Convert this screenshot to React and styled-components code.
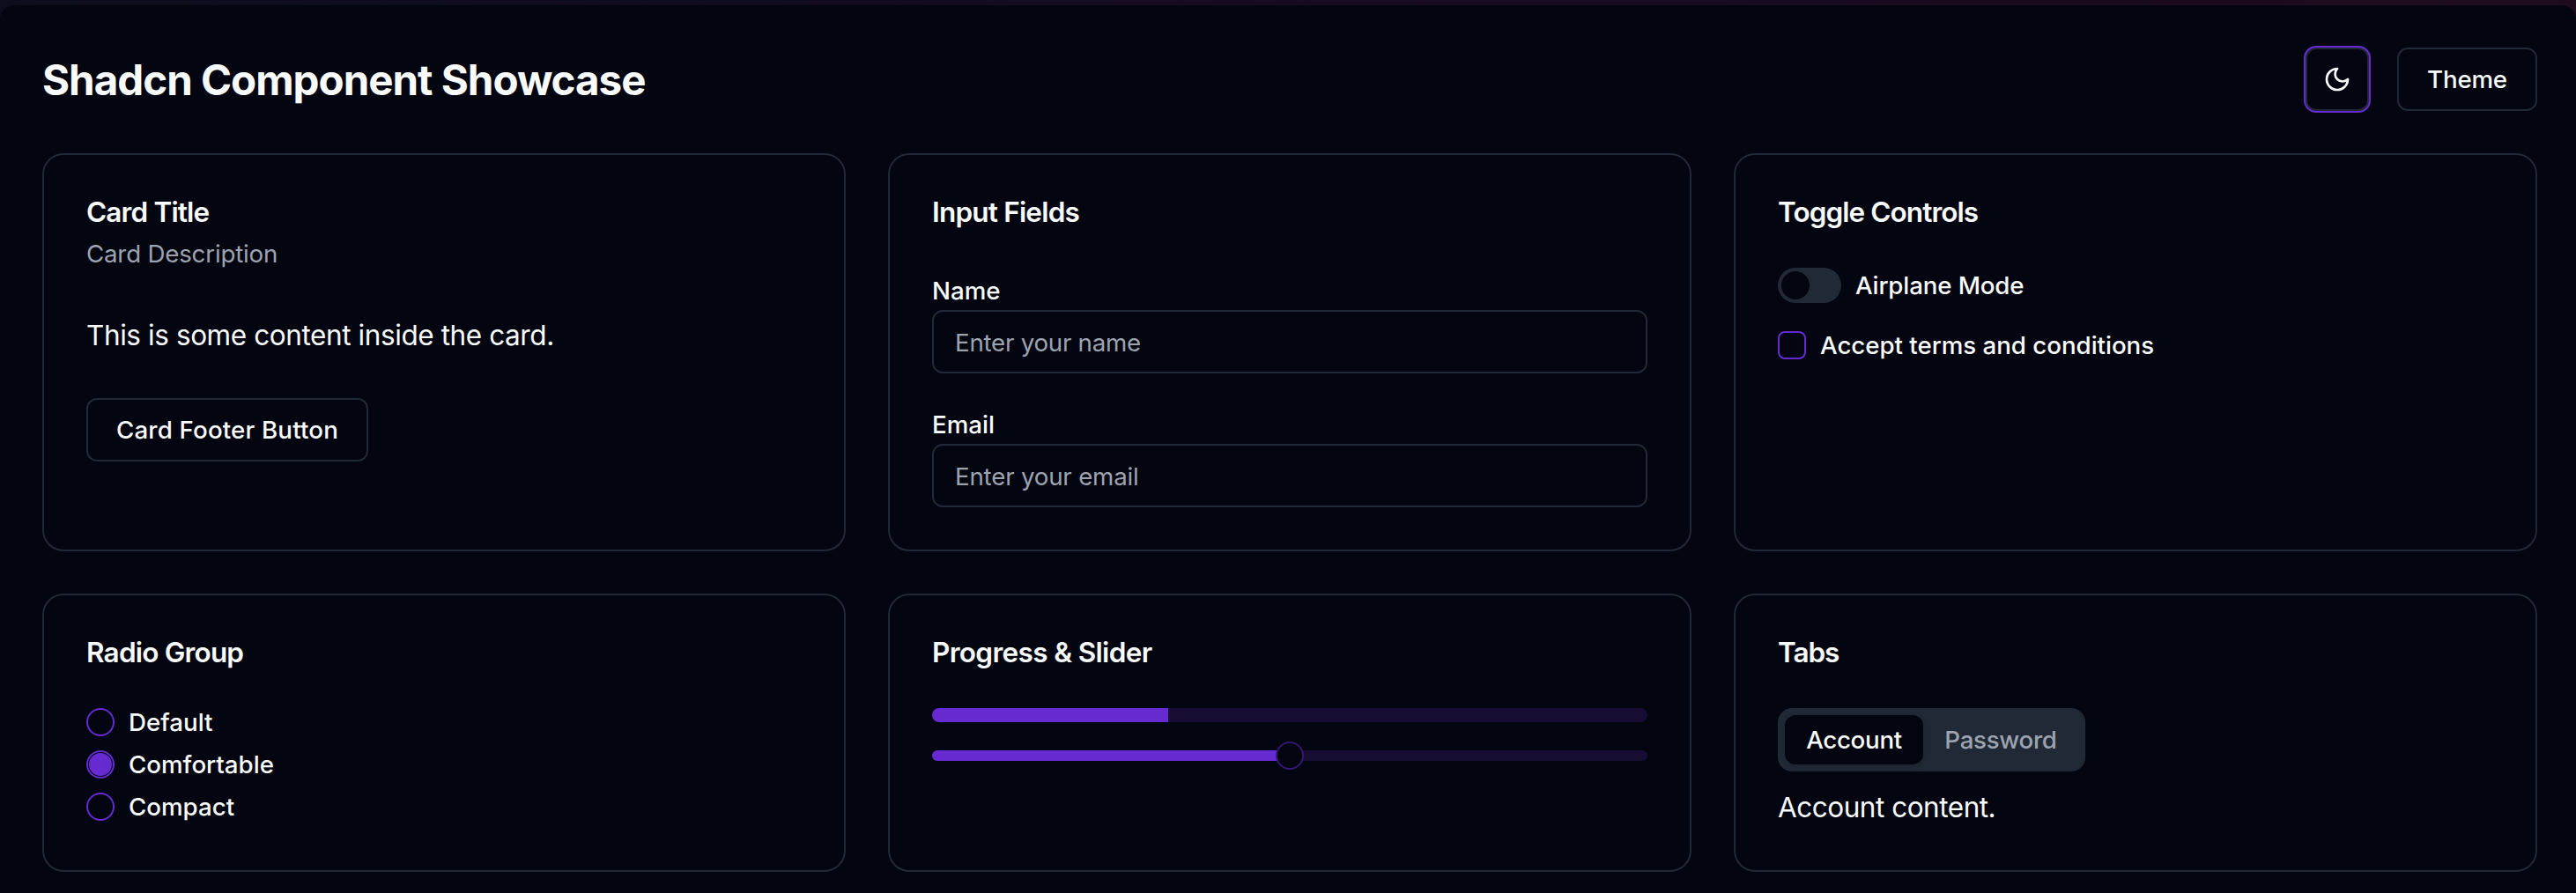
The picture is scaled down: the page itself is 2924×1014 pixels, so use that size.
import React from "react";
import styled, { createGlobalStyle, css } from "styled-components";

const c = {
  bg: "#030510",
  fg: "#f9fafb",
  border: "#212936",
  muted: "#9ca3af",
  primary: "#652bd1",
  track: "#170d33",
};

const Global = createGlobalStyle`
  *, *::before, *::after { box-sizing: border-box; }
  body {
    margin: 0;
    background: linear-gradient(90deg, #0d0e1d 0, #120c1f 30%, #180b20 65%, #1f0b1e 100%) 0 0 / 100% 30px no-repeat ${c.bg};
    font-family: Inter, "Liberation Sans", sans-serif;
    color: ${c.fg};
    -webkit-font-smoothing: antialiased;
  }
`;

const Page = styled.main`
  margin-top: 6px;
  min-height: 1008px;
  padding: 48px 44px 24px 48px;
  background: ${c.bg};
  border-radius: 16px 16px 0 0;
`;

const Header = styled.header`
  display: flex;
  align-items: center;
  justify-content: space-between;
  height: 72px;
  margin-bottom: 48px;
`;

const tracked = css`
  letter-spacing: ${(p) => p.$ls || 0}px;
  white-space: nowrap;
`;

const PageTitle = styled.h1`
  margin: 1px 0 0;
  font-size: 47.5px;
  line-height: 64px;
  font-weight: 700;
  ${tracked}
`;

const Actions = styled.div`
  display: flex;
  gap: 32px;
`;

const Button = styled.button`
  display: inline-flex;
  align-items: center;
  justify-content: center;
  width: ${(p) => p.$w}px;
  height: 72px;
  padding: 0;
  border: 2px solid ${c.border};
  border-radius: 12px;
  background: ${c.bg};
  color: ${c.fg};
  font: 500 27.7px/40px Inter, "Liberation Sans", sans-serif;
  box-shadow: ${(p) => (p.$ring ? `0 0 0 2px ${c.primary}` : "none")};
  ${tracked}
`;

const Grid = styled.div`
  display: grid;
  grid-template-columns: repeat(3, 912px);
  grid-template-rows: 452px 316px;
  gap: 48px;
`;

const Card = styled.section`
  padding: 48px;
  border: 2px solid ${c.border};
  border-radius: 24px;
`;

const CardHeader = styled.div`
  display: flex;
  flex-direction: column;
  gap: 12px;
  padding-bottom: 48px;
`;

const CardTitle = styled.h3`
  margin: 0;
  padding-top: 1px;
  height: 32px;
  font-size: 31.5px;
  line-height: 32px;
  font-weight: 600;
  ${tracked}
`;

const CardDescription = styled.p`
  margin: 0;
  font-size: 27.7px;
  line-height: 40px;
  color: ${c.muted};
  ${tracked}
`;

const Text = styled.p`
  margin: 0;
  padding-top: 1px;
  height: 48px;
  font-size: 31.5px;
  line-height: 48px;
  ${tracked}
`;

const CardFooter = styled.div`
  display: flex;
  padding-top: 48px;
`;

const Stack = styled.div`
  display: flex;
  flex-direction: column;
  gap: ${(p) => p.$gap}px;
`;

const Field = styled.div`
  padding-top: 2px;
  font-size: 31.5px;
  line-height: 46px;
`;

const Label = styled.label`
  font-size: 27.7px;
  line-height: 32px;
  font-weight: 500;
  ${tracked}
`;

const Input = styled.input`
  display: block;
  width: 100%;
  height: 72px;
  padding: 1px 24px 0;
  border: 2px solid ${c.border};
  border-radius: 12px;
  outline: none;
  background: transparent;
  color: ${c.fg};
  font: 400 27.7px/40px Inter, "Liberation Sans", sans-serif;
  ${tracked}
  &::placeholder { color: ${c.muted}; opacity: 1; }
`;

const Row = styled.div`
  display: flex;
  align-items: center;
  gap: 16px;
  line-height: 32px;
`;

const Switch = styled.button`
  width: 72px;
  height: 40px;
  padding: 4px;
  border: 0;
  border-radius: 20px;
  background: ${c.border};
`;

const SwitchThumb = styled.span`
  display: block;
  width: 32px;
  height: 32px;
  border-radius: 50%;
  background: ${c.bg};
`;

const Checkbox = styled.button`
  width: 32px;
  height: 32px;
  padding: 0;
  border: 2px solid ${c.primary};
  border-radius: 8px;
  background: transparent;
`;

const Radio = styled.button`
  display: grid;
  place-items: center;
  width: 32px;
  height: 32px;
  padding: 0;
  border: 2px solid ${c.primary};
  border-radius: 50%;
  background: transparent;
`;

const RadioDot = styled.span`
  width: 26px;
  height: 26px;
  border-radius: 50%;
  background: ${c.primary};
`;

const Track = styled.div`
  display: flex;
  align-items: center;
  height: ${(p) => p.$h}px;
  border-radius: 8px;
  background: ${c.track};
`;

const Fill = styled.div`
  width: ${(p) => p.$value}%;
  height: 100%;
  border-radius: 8px 0 0 8px;
  background: ${c.primary};
`;

const SliderThumb = styled.span`
  flex: none;
  width: 32px;
  height: 32px;
  margin-left: -16px;
  border: 2px solid #341873;
  border-radius: 50%;
  background: ${c.bg};
`;

const TabList = styled.div`
  display: flex;
  width: 349px;
  height: 72px;
  padding: 8px;
  border-radius: 16px;
  background: ${c.border};
`;

const Tab = styled.button`
  flex: none;
  width: ${(p) => p.$w}px;
  padding: 0;
  border: 0;
  border-radius: 12px;
  background: ${(p) => (p.$active ? c.bg : "transparent")};
  color: ${(p) => (p.$active ? c.fg : c.muted)};
  box-shadow: ${(p) => (p.$active ? "0 2px 6px rgba(0, 0, 0, 0.15)" : "none")};
  font: 500 27.7px/40px Inter, "Liberation Sans", sans-serif;
  ${tracked}
`;

const MoonIcon = () => (
  <svg width="32" height="32" viewBox="0 0 24 24" fill="none" stroke="currentColor" strokeWidth="2" strokeLinecap="round" strokeLinejoin="round">
    <path d="M12 3a6 6 0 0 0 9 9 9 9 0 1 1-9-9Z" />
  </svg>
);

const radios = [
  { label: "Default" },
  { label: "Comfortable", checked: true },
  { label: "Compact" },
];

export default function App() {
  return (
    <>
      <Global />
      <Page>
        <Header>
          <PageTitle $ls={-1}>Shadcn Component Showcase</PageTitle>
          <Actions>
            <Button $w={72} $ring aria-label="Toggle dark mode">
              <MoonIcon />
            </Button>
            <Button $w={159} $ls={-0.2}>Theme</Button>
          </Actions>
        </Header>
        <Grid>
          <Card>
            <CardHeader>
              <CardTitle $ls={-0.85}>Card Title</CardTitle>
              <CardDescription $ls={-0.2}>Card Description</CardDescription>
            </CardHeader>
            <Text $ls={-0.41}>This is some content inside the card.</Text>
            <CardFooter>
              <Button $w={320} $ls={0.17}>Card Footer Button</Button>
            </CardFooter>
          </Card>
          <Card>
            <CardHeader>
              <CardTitle $ls={-0.8}>Input Fields</CardTitle>
            </CardHeader>
            <Stack $gap={32}>
              <Field>
                <Label htmlFor="name">Name</Label>
                <Input id="name" placeholder="Enter your name" $ls={-0.25} />
              </Field>
              <Field>
                <Label htmlFor="email">Email</Label>
                <Input id="email" placeholder="Enter your email" $ls={-0.2} />
              </Field>
            </Stack>
          </Card>
          <Card>
            <CardHeader>
              <CardTitle $ls={-0.92}>Toggle Controls</CardTitle>
            </CardHeader>
            <Stack $gap={32}>
              <Row>
                <Switch role="switch" aria-checked="false"><SwitchThumb /></Switch>
                <Label $ls={-0.14}>Airplane Mode</Label>
              </Row>
              <Row>
                <Checkbox role="checkbox" aria-checked="false" />
                <Label $ls={-0.03}>Accept terms and conditions</Label>
              </Row>
            </Stack>
          </Card>
          <Card>
            <CardHeader>
              <CardTitle $ls={-0.8}>Radio Group</CardTitle>
            </CardHeader>
            <Stack $gap={16} role="radiogroup">
              {radios.map((r) => (
                <Row key={r.label}>
                  <Radio role="radio" aria-checked={!!r.checked}>{r.checked && <RadioDot />}</Radio>
                  <Label>{r.label}</Label>
                </Row>
              ))}
            </Stack>
          </Card>
          <Card>
            <CardHeader>
              <CardTitle $ls={-0.65}>Progress &amp; Slider</CardTitle>
            </CardHeader>
            <Stack $gap={32}>
              <Track $h={16}><Fill $value={33} /></Track>
              <Track $h={12}><Fill $value={50} /><SliderThumb /></Track>
            </Stack>
          </Card>
          <Card>
            <CardHeader>
              <CardTitle $ls={-1.1}>Tabs</CardTitle>
            </CardHeader>
            <Stack $gap={16}>
              <TabList role="tablist">
                <Tab $w={157} $ls={-0.3} $active role="tab">Account</Tab>
                <Tab $w={176} $ls={-0.3} role="tab">Password</Tab>
              </TabList>
              <Text $ls={-0.48}>Account content.</Text>
            </Stack>
          </Card>
        </Grid>
      </Page>
    </>
  );
}
